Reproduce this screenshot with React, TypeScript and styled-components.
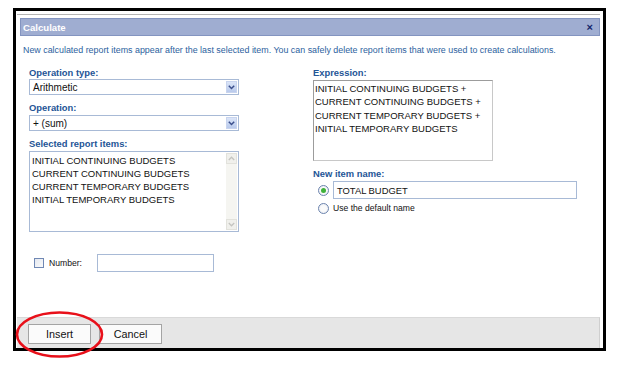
import React from "react";
import styled, { createGlobalStyle } from "styled-components";

const Global = createGlobalStyle`
  html, body { margin: 0; padding: 0; background: #fff; }
  body { font-family: "Liberation Sans", Arial, sans-serif; }
  * { box-sizing: border-box; }
`;

const Page = styled.div`
  position: relative;
  width: 624px;
  height: 366px;
  padding: 8px 0 0 13px;
`;

const Frame = styled.div`
  width: 593px;
  height: 343px;
  border: 3px solid #000;
  padding: 3px 3px 0 1px;
  display: flex;
`;

const Dialog = styled.div`
  flex: 1;
  display: flex;
  flex-direction: column;
  border-top: 1px solid #b4b4b4;
  padding-top: 3px;
`;

const TitleBar = styled.div`
  margin-left: 3px;
  height: 18px;
  background: #9fadd1;
  border: 1px solid #8394c0;
  display: flex;
  align-items: center;
  justify-content: space-between;
  padding: 0 6px 0 2px;
  color: #fff;
  font-weight: bold;
  font-size: 9.6px;
`;

const Close = styled.span`
  color: #14246a;
  font-size: 11px;
  font-weight: bold;
`;

const Description = styled.div`
  margin: 8px 0 0 6px;
  font-size: 8.9px;
  line-height: 12px;
  color: #2c5f9e;
  white-space: nowrap;
`;

const Columns = styled.div`
  display: flex;
  padding-left: 12px;
  margin-top: 11px;
  gap: 74px;
`;

const Column = styled.div<{ $w: number }>`
  width: ${(p) => p.$w}px;
  display: flex;
  flex-direction: column;
`;

const Label = styled.div<{ $first?: boolean; $gap?: number }>`
  font-size: 9.4px;
  font-weight: bold;
  color: #245596;
  line-height: 12px;
  margin-top: ${(p) => (p.$first ? 0 : 7)}px;
  margin-bottom: ${(p) => p.$gap ?? 0}px;
`;

const Select = styled.div`
  height: 16px;
  border: 1px solid #a8bad6;
  display: flex;
  align-items: center;
  justify-content: space-between;
  padding: 0 1px 0 3px;
  font-size: 10px;
  color: #111;
`;

const ArrowBtn = styled.div`
  width: 11px;
  height: 12px;
  background: linear-gradient(#dbe5f8, #b9caec);
  border: 1px solid #c8d4ee;
  display: flex;
  align-items: center;
  justify-content: center;
`;

const ListBox = styled.div`
  height: 81px;
  border: 1px solid #a8bad6;
  display: flex;
`;

const ListLines = styled.div`
  flex: 1;
  padding: 2px 0 0 2px;
  font-size: 9.5px;
  line-height: 13px;
  color: #111;
  white-space: nowrap;
`;

const ScrollBar = styled.div`
  width: 11px;
  margin: 1px 1px 1px 0;
  background: #f5f5f1;
  display: flex;
  flex-direction: column;
  justify-content: space-between;
`;

const ScrollArrow = styled.div`
  height: 11px;
  background: #f0f0ec;
  border: 1px solid #e2e2dc;
  display: flex;
  align-items: center;
  justify-content: center;
`;

const NumberRow = styled.div`
  display: flex;
  align-items: center;
  margin: 22px 0 0 17px;
  height: 18px;
`;

const CheckBox = styled.div`
  width: 10px;
  height: 10px;
  border: 1px solid #7088b4;
  background: linear-gradient(135deg, #e4e8f0, #fafafa);
`;

const SmallText = styled.span<{ $ml?: number }>`
  font-size: 8.6px;
  color: #111;
  margin-left: ${(p) => p.$ml ?? 5}px;
`;

const TextInput = styled.div<{ $w: number }>`
  width: ${(p) => p.$w}px;
  height: 18px;
  border: 1px solid #a8bad6;
  font-size: 9.4px;
  display: flex;
  align-items: center;
  padding-left: 3px;
  color: #111;
`;

const NumberInput = styled(TextInput)`
  margin-left: 15px;
`;

const Expression = styled.div`
  width: 180px;
  height: 81px;
  border: 1px solid #9c9c9c;
  border-right-color: #c8c8c8;
  border-bottom-color: #c8c8c8;
  padding: 1px 0 0 1px;
  font-size: 9.5px;
  line-height: 13.3px;
  color: #111;
  white-space: nowrap;
`;

const RadioRow = styled.div<{ $h: number }>`
  display: flex;
  align-items: center;
  height: ${(p) => p.$h}px;
  padding-left: 5px;
`;

const Radio = styled.div<{ $on?: boolean }>`
  width: 11px;
  height: 11px;
  border-radius: 50%;
  border: 1px solid #6c84ae;
  background: radial-gradient(circle, #fbfbfb 40%, #e2e6ee);
  display: flex;
  align-items: center;
  justify-content: center;
  margin-right: 4px;
  &::after {
    content: "";
    display: ${(p) => (p.$on ? "block" : "none")};
    width: 5px;
    height: 5px;
    border-radius: 50%;
    background: #3fb23a;
  }
`;

const Spacer = styled.div`
  flex: 1;
`;

const Footer = styled.div`
  height: 31px;
  background: #e6e6e6;
  border-top: 1px solid #d9d9d9;
  border-right: 1px solid #cfcfcf;
  display: flex;
  gap: 8px;
  padding: 6px 0 0 11px;
`;

const Button = styled.div`
  width: 63px;
  height: 20px;
  background: #fbfbfb;
  border: 1px solid #a4a4a4;
  display: flex;
  align-items: center;
  justify-content: center;
  font-size: 10.8px;
  color: #111;
`;

const Highlight = styled.svg`
  position: absolute;
  left: 14px;
  top: 309px;
`;

const Chevron = () => (
  <svg width="7" height="5" viewBox="0 0 7 5">
    <path d="M0.8 0.8 L3.5 3.5 L6.2 0.8" fill="none" stroke="#3b4f8c" strokeWidth="1.5" />
  </svg>
);

const SmallArrow = ({ up }: { up?: boolean }) => (
  <svg width="7" height="5" viewBox="0 0 7 5">
    <path d={up ? "M0.8 4 L3.5 1.2 L6.2 4" : "M0.8 1 L3.5 3.8 L6.2 1"} fill="none" stroke="#c4c4c0" strokeWidth="1.3" />
  </svg>
);

const items = [
  "INITIAL CONTINUING BUDGETS",
  "CURRENT CONTINUING BUDGETS",
  "CURRENT TEMPORARY BUDGETS",
  "INITIAL TEMPORARY BUDGETS",
];

export default function App() {
  return (
    <Page>
      <Global />
      <Frame>
        <Dialog>
          <TitleBar>
            <span>Calculate</span>
            <Close>×</Close>
          </TitleBar>
          <Description>
            New calculated report items appear after the last selected item. You can safely delete report items that were used to create calculations.
          </Description>
          <Columns>
            <Column $w={210}>
              <Label $first>Operation type:</Label>
              <Select>
                <span>Arithmetic</span>
                <ArrowBtn><Chevron /></ArrowBtn>
              </Select>
              <Label $gap={1}>Operation:</Label>
              <Select>
                <span>+ (sum)</span>
                <ArrowBtn><Chevron /></ArrowBtn>
              </Select>
              <Label $gap={1}>Selected report items:</Label>
              <ListBox>
                <ListLines>
                  {items.map((t) => (
                    <div key={t}>{t}</div>
                  ))}
                </ListLines>
                <ScrollBar>
                  <ScrollArrow><SmallArrow up /></ScrollArrow>
                  <ScrollArrow><SmallArrow /></ScrollArrow>
                </ScrollBar>
              </ListBox>
            </Column>
            <Column $w={264}>
              <Label $first $gap={1}>Expression:</Label>
              <Expression>
                <div>INITIAL CONTINUING BUDGETS +</div>
                <div>CURRENT CONTINUING BUDGETS +</div>
                <div>CURRENT TEMPORARY BUDGETS +</div>
                <div>INITIAL TEMPORARY BUDGETS</div>
              </Expression>
              <Label $gap={1}>New item name:</Label>
              <RadioRow $h={18}>
                <Radio $on />
                <TextInput $w={244}>TOTAL BUDGET</TextInput>
              </RadioRow>
              <RadioRow $h={18}>
                <Radio />
                <SmallText $ml={0}>Use the default name</SmallText>
              </RadioRow>
            </Column>
          </Columns>
          <NumberRow>
            <CheckBox />
            <SmallText>Number:</SmallText>
            <NumberInput $w={117} />
          </NumberRow>
          <Spacer />
          <Footer>
            <Button>Insert</Button>
            <Button>Cancel</Button>
          </Footer>
        </Dialog>
      </Frame>
      <Highlight width="92" height="52" viewBox="0 0 92 52">
        <ellipse cx="45.5" cy="25.5" rx="42.5" ry="22" fill="none" stroke="#e8101a" strokeWidth="2.6" />
      </Highlight>
    </Page>
  );
}
